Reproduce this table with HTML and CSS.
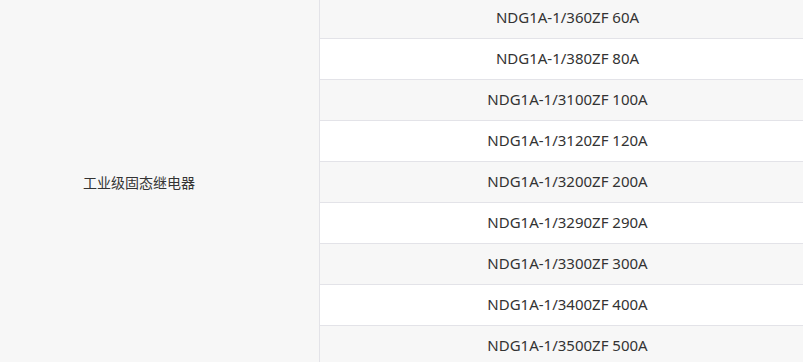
FILE: index.html
```html
<!DOCTYPE html>
<html lang="zh-CN">
<head>
    <meta charset="UTF-8">
    <meta name="viewport" content="width=device-width, initial-scale=1.0">
    <title>工业级固态继电器</title>
    <link rel="stylesheet" href="styles.css">
</head>
<body>
    <div class="spec-table">
        <div class="category">工业级固态继电器</div>
        <div class="model-list">
            <div class="model">NDG1A-1/360ZF 60A</div>
            <div class="model">NDG1A-1/380ZF 80A</div>
            <div class="model">NDG1A-1/3100ZF 100A</div>
            <div class="model">NDG1A-1/3120ZF 120A</div>
            <div class="model">NDG1A-1/3200ZF 200A</div>
            <div class="model">NDG1A-1/3290ZF 290A</div>
            <div class="model">NDG1A-1/3300ZF 300A</div>
            <div class="model">NDG1A-1/3400ZF 400A</div>
            <div class="model">NDG1A-1/3500ZF 500A</div>
        </div>
    </div>
</body>
</html>
```

FILE: styles.css
```css
body {
    margin: 0;
    overflow: hidden;
    background-color: #fff;
    color: #333;
    font-family: "Noto Sans", "Noto Sans CJK SC", sans-serif;
}

.spec-table {
    display: flex;
    width: 815px;
    margin-top: -2px;
}

.category {
    display: flex;
    align-items: center;
    width: 320px;
    padding-left: 83px;
    padding-bottom: 2px;
    box-sizing: border-box;
    background-color: #f7f7f7;
    border-right: 1px solid #e3e3e8;
    font-family: "Noto Sans CJK SC", sans-serif;
    font-size: 14px;
}

.model-list {
    flex: 1;
}

/* each row is 40px plus its 1px rule */
.model {
    display: flex;
    align-items: center;
    justify-content: center;
    height: 41px;
    padding-bottom: 3px;
    box-sizing: border-box;
    border-bottom: 1px solid #e3e3e8;
    font-size: 15px;
}

.model:nth-child(odd) {
    background-color: #f7f7f7;
}
```
